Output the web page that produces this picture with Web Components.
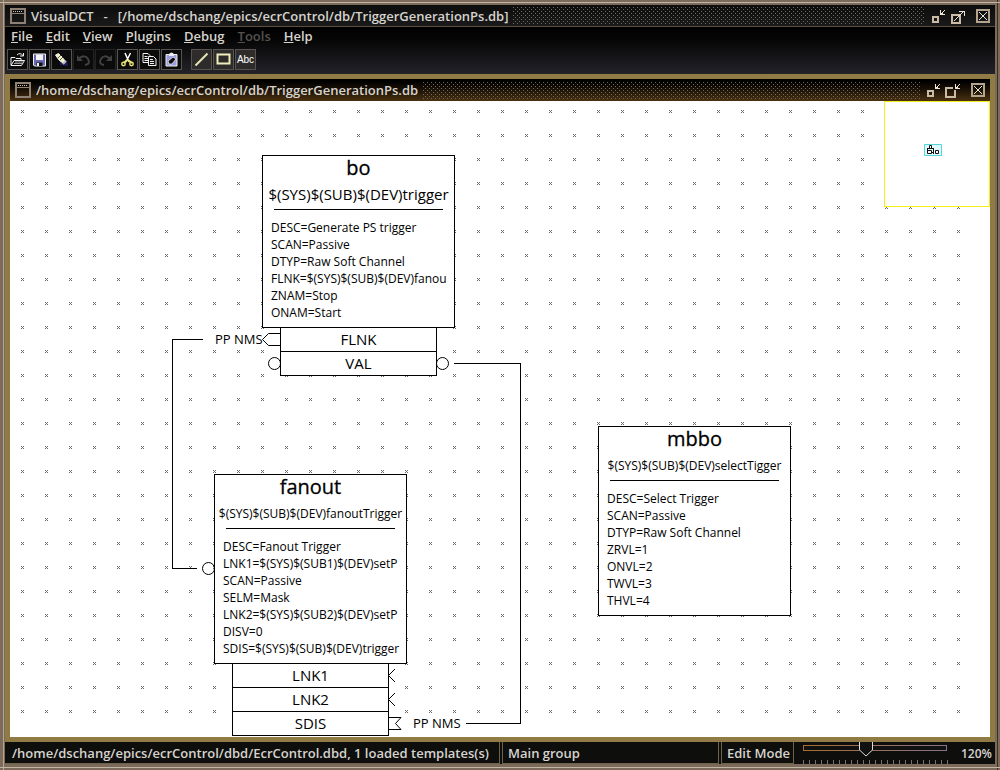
<!DOCTYPE html>
<html lang="en">
<head>
<meta charset="utf-8">
<title>VisualDCT</title>
<style>
  body { margin: 0; font-family: "Open Sans", "Noto Sans", sans-serif; }
</style>
</head>
<body>
<vdct-app></vdct-app>

<script>
const define = (name, html, setup) => {
  const template = document.createElement('template');
  template.innerHTML = html;
  customElements.define(name, class extends HTMLElement {
    connectedCallback() {
      if (this.shadowRoot) return;
      this.attachShadow({ mode: 'open' }).append(template.content.cloneNode(true));
      if (setup) setup(this, this.shadowRoot);
    }
  });
};

/* Title bar with window menu, caption, stippled grip and window controls */
define('vdct-titlebar', `
<style>
  :host { display: flex; align-items: center; height: 21px; padding: 0 3px 0 5px; box-sizing: border-box;
    color: #d6d3cd; font-weight: 600; font-size: 13px; line-height: 20px; background: linear-gradient(#0c0c0c, #1a1a1a); }
  :host([inner]) { height: 22px; background: linear-gradient(#000 10%, #1c1206 50%, #4a3110); }
  button { all: unset; display: block; height: 20px; }
  svg { display: block; fill: none; shape-rendering: crispEdges; }
  .caption { display: flex; gap: 10px; margin-left: 5px; white-space: nowrap; flex: none; }
  .grip { flex: 1; height: 17px; margin: 0 5px;
    background: url("data:image/svg+xml,%3Csvg xmlns='http://www.w3.org/2000/svg' width='4' height='4'%3E%3Cpath d='M0 0h1v1H0zM2 2h1v1H2z' fill='%23706c66'/%3E%3C/svg%3E"); }
  .size { margin-left: 2px; }
  .close { margin-left: 8px; }
  .restore, :host([inner]) .maximize { display: none; }
  :host([inner]) .restore { display: block; }
</style>
<button aria-label="Window menu"><svg width="16" height="20"><path d="M1 3h14v14H1z" stroke="#8d8275" stroke-width="2"/><path d="M2 7.500h12" stroke="#8d8275"/><path d="M3 5.500h10" stroke="#d0c6b6" stroke-dasharray="1 1"/></svg></button>
<span class="caption"><slot></slot></span>
<span class="grip"></span>
<button aria-label="Minimize"><svg width="16" height="20"><path d="M3 11h5v5H3z" stroke="#c9bba6" stroke-width="2"/><path d="M10.500 4v4.500H15M11 8.500L15 4" stroke="#eee6d8"/></svg></button>
<button class="size" aria-label="Resize">
  <svg class="maximize" width="18" height="20"><path d="M4 9h8v8H4z" stroke="#c9bba6" stroke-width="2"/><path d="M6 15L15 6M11 5.500h5.500V10" stroke="#eee6d8"/></svg>
  <svg class="restore" width="18" height="20"><path d="M10 8H3v9h9v-7" stroke="#c9bba6" stroke-width="2"/><path d="M12.500 4v4.500H17M13 8.500L17 4" stroke="#eee6d8"/></svg>
</button>
<button class="close" aria-label="Close"><svg width="18" height="20"><path d="M3 4h12v12H3z" stroke="#b3a48f" stroke-width="2"/><path d="M5 6l8 8M13 6l-8 8" stroke="#eee6d8" stroke-width="1" shape-rendering="auto"/></svg></button>
`);

define('vdct-menu', `
<style>
  :host { display: flex; gap: 13px; padding: 0 6px; height: 22px; align-items: flex-start; }
  :host slot { display: contents; }
  ::slotted(button) { all: unset; font: 600 13px/18px "Open Sans", "Noto Sans", sans-serif; color: #d6d3cd; }
  ::slotted(button:disabled) { color: #55524e; }
</style><slot></slot>`);

define('vdct-tool', `
<style>
  :host { display: block; }
  button { all: unset; display: block; box-sizing: border-box; width: 21px; height: 21px; padding: 2px;
    border: 1px solid #57544f; background: #0b0b0c; }
  :host([off]) button { border-color: #222; }
  :host([lit]) button { background: #2e2c2b; }
</style><button><slot></slot></button>`,
(host, root) => {
  const b = root.querySelector('button');
  b.setAttribute('aria-label', host.getAttribute('label'));
  b.disabled = host.hasAttribute('off');
});

define('vdct-toolbar', `
<style>
  :host { display: flex; gap: 1px; padding: 0 2px; height: 25px; }
  .gap { width: 7px; }
  svg { display: block; width: 15px; height: 15px; fill: none; }
  text { font: 10px "Liberation Sans", sans-serif; fill: #fff; }
</style>
<vdct-tool label="Open"><svg viewBox="0 0 15 15" stroke="#f2f2f2"><path d="M1 13V5.500h4l1 1h5V8M1 13.500h10.500L14.500 8.500H4L1 13.500" /><path d="M4 11.500h8M5 10h8" stroke="#999"/><path d="M7 3q3-3 6 .5M13.500 1v3H10"/></svg></vdct-tool>
<vdct-tool label="Save"><svg viewBox="0 0 15 15"><path d="M1.500 2h12v12h-11l-1-1z" fill="#6a6ab0" stroke="#f0f0f0"/><path d="M4 2.500h7V8H4z" fill="#f4f4f4"/><path d="M4.500 10.500h6V14h-6z" fill="#111"/><path d="M5 11h2v3H5z" fill="#eee"/></svg></vdct-tool>
<vdct-tool label="Find"><svg viewBox="0 0 15 15"><path d="M6 5l7 4 1 5-8-1z" fill="#1c1c5c"/><path d="M1.500 3L4.500 1.500L8 5l3.500 4.500-2 2L5 8z" fill="#f4f3c0" stroke="#eee"/><path d="M4 6l3-3M6 8l3-3" stroke="#555"/><path d="M9 12l3-3" stroke="#bbb" stroke-width="2"/></svg></vdct-tool>
<vdct-tool label="Undo" off><svg viewBox="0 0 15 15"><path d="M3 6.500Q9 2 12 7T9 13" stroke="#414141" stroke-width="2"/><path d="M1 3v6h6z" fill="#414141"/></svg></vdct-tool>
<vdct-tool label="Redo" off><svg viewBox="0 0 15 15"><path d="M12 6.500Q6 2 3 7T6 13" stroke="#414141" stroke-width="2"/><path d="M14 3v6H8z" fill="#414141"/></svg></vdct-tool>
<vdct-tool label="Cut"><svg viewBox="0 0 15 15"><path d="M5 1l4 9M10.500 1L6 10" stroke="#fff" stroke-width="1.500"/><path d="M7 8L4 11M8 8l4 3" stroke="#e8e070" stroke-width="2"/><circle cx="3.500" cy="12" r="1.700" stroke="#e8e070" stroke-width="1.500"/><circle cx="11.500" cy="12" r="1.700" stroke="#e8e070" stroke-width="1.500"/></svg></vdct-tool>
<vdct-tool label="Copy"><svg viewBox="0 0 15 15" stroke="#f2f2f2"><path d="M1 1.500h5l2 2v7H1z"/><path d="M2.500 4.500h3M2.500 6.500h4M2.500 8.500h4"/><path d="M6.500 4.500h5l2.500 2.500v6.500H6.500z" fill="#111"/><path d="M8 7.500h3M8 9.500h4M8 11.500h4"/></svg></vdct-tool>
<vdct-tool label="Paste"><svg viewBox="0 0 15 15"><path d="M2 2.500h11V14H2z" fill="#9c9ce0" stroke="#eee"/><path d="M5 2q2.500-3 5 0v2H5z" fill="#eee"/><path d="M4 9l5-4 3 2-4 5H5z" fill="#111" stroke="#fff" stroke-width=".7"/></svg></vdct-tool>
<span class="gap"></span>
<vdct-tool label="Line" lit><svg viewBox="0 0 15 15"><path d="M1.500 13.500l12-12" stroke="#e9e6b4" stroke-width="2"/></svg></vdct-tool>
<vdct-tool label="Box" lit><svg viewBox="0 0 15 15"><path d="M1.500 2.500h12v9h-12z" stroke="#f0edbc" stroke-width="2"/></svg></vdct-tool>
<vdct-tool label="Text box" lit><svg viewBox="0 0 15 15" overflow="visible"><text x="7.500" y="11" text-anchor="middle">Abc</text></svg></vdct-tool>
`);

/* A record node: type, name, field lines (slotted) and link ports */
define('vdct-record', `
<style>
  :host { display: block; position: absolute; width: 193px; color: #000; }
  .body { background: #fff; border: 1px solid #000; padding-bottom: 6px; text-align: center; }
  h2 { margin: 0; font-size: 20px; line-height: 24px; font-weight: 400; -webkit-text-stroke: .3px #000; }
  .name { font-size: var(--name-size, 12px); line-height: 29px; white-space: nowrap; }
  hr { margin: 0 11px 9px; border: 0; height: 1px; background: #000; }
  .fields { padding-left: 8px; text-align: left; font-size: 12px; line-height: 17px; white-space: nowrap; }
  ::slotted(*) { display: block; }
  .ports { width: 155px; margin-left: 18px; border: solid #000; border-width: 0 1px; background: #fff; }
  .ports div { height: 23px; border-bottom: 1px solid #000; text-align: center; font-size: 15px; line-height: 22px; }
</style>
<div class="body"><h2></h2><div class="name"></div><hr><div class="fields"><slot></slot></div></div>
<div class="ports"></div>`,
(host, root) => {
  root.querySelector('h2').textContent = host.getAttribute('type');
  root.querySelector('.name').textContent = host.getAttribute('name');
  const ports = (host.getAttribute('ports') || '').split(' ').filter(Boolean);
  const box = root.querySelector('.ports');
  if (!ports.length) box.remove();
  for (const p of ports) box.appendChild(document.createElement('div')).textContent = p;
});

define('vdct-navigator', `
<style>
  :host { display: block; position: absolute; top: 0; right: 0; width: 104px; height: 104px;
    border: 1px solid #f4ee1c; background: #fff; }
  svg { display: block; margin: 42px 0 0 39px; }
</style>
<svg width="19" height="14" fill="#fff" stroke="#111"><path d="M.5.5h17v11H.5z" fill="#e4fafa" stroke="#4fd6dc"/><path d="M5.500 1.500h2v3h-2zM3.500 6.500h4v3h-4zM11.500 6.500h3v3h-3zM3.500 4v3M9.500 4v6M8 8.500h2M3 4.500h6"/></svg>`);

define('vdct-canvas', `
<style>
  :host { display: block; position: relative; flex: 1; min-height: 636px; background: #fff; overflow: hidden; }
  .grid { position: absolute; inset: 0 24px 24px 0;
    background: url("data:image/svg+xml,%3Csvg xmlns='http://www.w3.org/2000/svg' width='24' height='24' shape-rendering='crispEdges'%3E%3Cpath d='M11 9h1v1h-1zM13 9h1v1h-1zM12 10h1v1h-1zM11 11h1v1h-1zM13 11h1v1h-1z' fill='%23666'/%3E%3C/svg%3E"); }
  .wires { position: absolute; inset: 0; width: 100%; height: 100%; fill: none; stroke: #000; }
  .wires text { fill: #000; stroke: none; font-size: 13px; }
  .bo { left: 252px; top: 54px; --name-size: 15px; }
  .fanout { left: 204px; top: 373px; }
  .mbbo { left: 588px; top: 325px; }
</style>
<div class="grid"></div>
<vdct-record class="bo" type="bo" name="$(SYS)$(SUB)$(DEV)trigger" ports="FLNK VAL">
  <span>DESC=Generate PS trigger</span><span>SCAN=Passive</span><span>DTYP=Raw Soft Channel</span>
  <span>FLNK=$(SYS)$(SUB)$(DEV)fanou</span><span>ZNAM=Stop</span><span>ONAM=Start</span>
</vdct-record>
<vdct-record class="fanout" type="fanout" name="$(SYS)$(SUB)$(DEV)fanoutTrigger" ports="LNK1 LNK2 SDIS">
  <span>DESC=Fanout Trigger</span><span>LNK1=$(SYS)$(SUB1)$(DEV)setP</span><span>SCAN=Passive</span>
  <span>SELM=Mask</span><span>LNK2=$(SYS)$(SUB2)$(DEV)setP</span><span>DISV=0</span><span>SDIS=$(SYS)$(SUB)$(DEV)trigger</span>
</vdct-record>
<vdct-record class="mbbo" type="mbbo" name="$(SYS)$(SUB)$(DEV)selectTigger">
  <span>DESC=Select Trigger</span><span>SCAN=Passive</span><span>DTYP=Raw Soft Channel</span>
  <span>ZRVL=1</span><span>ONVL=2</span><span>TWVL=3</span><span>THVL=4</span>
</vdct-record>
<svg class="wires">
  <path d="M193 238.500H162.500V467.500H187M444 262.500H510.500V622.500H456" shape-rendering="crispEdges"/>
  <path d="M270 232.500H258.500L252.500 238.500L258.500 244.500H270"/>
  <circle cx="264.500" cy="262.500" r="6"/><circle cx="432.500" cy="262.500" r="6"/><circle cx="198.500" cy="467.500" r="6"/>
  <path d="M385 568L378.500 574.500L385 581M385 592L378.500 598.500L385 605M379 616.500H391L385.500 622.500L391 628.500H379"/>
  <text x="205" y="243">PP NMS</text><text x="403" y="627">PP NMS</text>
</svg>
<vdct-navigator></vdct-navigator>`);

define('vdct-zoom', `
<style>
  :host { display: flex; font-weight: 600; font-size: 12px; line-height: 24px; color: #d6d3cd; }
  .scale { position: relative; width: 158px; height: 22px; }
  .track { position: absolute; left: 7px; right: 7px; top: 3px; height: 4px; border: 1px solid #a08a78; border-image: linear-gradient(90deg, #a86c2c, #86738c) 1; background: #111; }
  .ticks { position: absolute; left: 7px; right: 6px; bottom: 0; height: 4px;
    background: repeating-linear-gradient(90deg, #77736c 0 1px, transparent 1px 6px); }
  input { -webkit-appearance: none; appearance: none; position: absolute; left: 0; top: 0; width: 158px; height: 15px; margin: 0; background: none; }
  input::-webkit-slider-thumb { -webkit-appearance: none; width: 14px; height: 15px;
    background: url("data:image/svg+xml,%3Csvg xmlns='http://www.w3.org/2000/svg' width='14' height='15'%3E%3Cpath d='M.5 0V8L7 14L13.500 8V0' fill='%23111' stroke='%23ddd'/%3E%3C/svg%3E"); }
  output { margin-left: 7px; }
</style>
<div class="scale"><div class="track"></div><div class="ticks"></div>
<input type="range" id="zoom" min="15" max="255" value="120" aria-label="Zoom"></div>
<output for="zoom">120%</output>`);

define('vdct-status', `
<style>
  :host { display: flex; height: 22px; color: #d6d3cd; background: #0e0e0d; font-weight: 600; font-size: 13px; line-height: 23px; gap: 2px; white-space: nowrap; }
  div { box-sizing: border-box; padding-left: 7px; border: solid #6e6248; border-width: 0 1px 1px 0; }
  div + div { border-left-width: 1px; padding-left: 5px; }
  .file { flex: 0 0 495px; } .group { flex: 1; } .mode { flex: 0 0 73px; }
  vdct-zoom { flex: 0 0 199px; }
</style>
<div class="file"><slot name="file"></slot></div>
<div class="group"><slot name="group"></slot></div>
<div class="mode"><slot name="mode"></slot></div>
<vdct-zoom></vdct-zoom>`);

define('vdct-app', `
<style>
  :host { display: flex; flex-direction: column; min-height: 100vh; box-sizing: border-box; padding: 5px 5px 6px;
    background: linear-gradient(#0e0e0d, #0e0e0d) content-box, linear-gradient(#c4b6a4, #c4b6a4) 0 2px / 100% 1px no-repeat,
    linear-gradient(#c4b6a4, #c4b6a4) 0 calc(100% - 2px) / 100% 1px no-repeat, linear-gradient(#b3a593, #b3a593) 3px 0 / 1px 100% no-repeat,
    linear-gradient(#3a2f27, #3a2f27) calc(100% - 2px) 0 / 1px 100% no-repeat, #7c6b5b; }
  .bars { background: linear-gradient(#000, #050505 25%, #24232a); border-top: 1px solid #5c4f3a; }
  .frame { flex: 1; display: flex; flex-direction: column; border: 5px solid #8f7b43; }
</style>
<vdct-titlebar><span>VisualDCT</span> <span>-</span> <span>[/home/dschang/epics/ecrControl/db/TriggerGenerationPs.db]</span></vdct-titlebar>
<div class="bars">
  <vdct-menu>
    <button><u>F</u>ile</button><button><u>E</u>dit</button><button><u>V</u>iew</button><button><u>P</u>lugins</button>
    <button><u>D</u>ebug</button><button disabled><u>T</u>ools</button><button><u>H</u>elp</button>
  </vdct-menu>
  <vdct-toolbar></vdct-toolbar>
</div>
<div class="frame">
  <vdct-titlebar inner>/home/dschang/epics/ecrControl/db/TriggerGenerationPs.db</vdct-titlebar>
  <vdct-canvas></vdct-canvas>
</div>
<vdct-status>
  <span slot="file">/home/dschang/epics/ecrControl/dbd/EcrControl.dbd, 1 loaded templates(s)</span>
  <span slot="group">Main group</span><span slot="mode">Edit Mode</span>
</vdct-status>`);
</script>
</body>
</html>
